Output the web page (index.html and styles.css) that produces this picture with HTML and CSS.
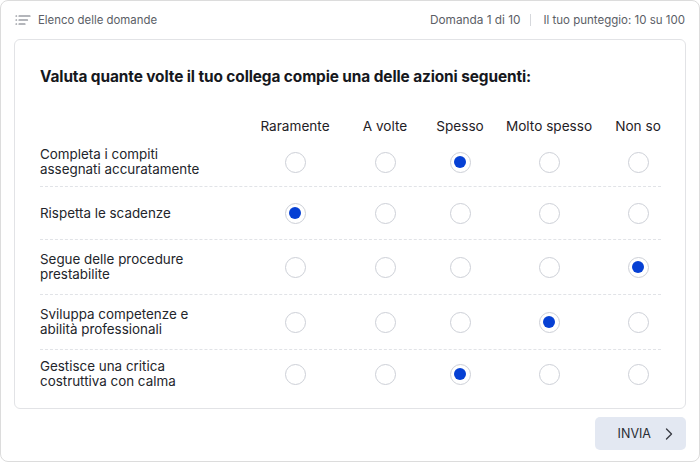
FILE: index.html
```html
<!DOCTYPE html>
<html lang="it">
<head>
<meta charset="utf-8">
<title>Questionario</title>
<link rel="stylesheet" href="styles.css">
</head>
<body>
<div class="frame">
  <header class="topbar">
    <div class="list-link">
      <svg class="list-icon" width="16" height="12" viewBox="0 0 16 12" aria-hidden="true">
        <g stroke="#6b6f78" stroke-width="1.2" stroke-linecap="round">
          <line x1="1" y1="2" x2="1.6" y2="2"/>
          <line x1="4" y1="2" x2="15" y2="2"/>
          <line x1="1" y1="6" x2="1.6" y2="6"/>
          <line x1="4" y1="6" x2="12.5" y2="6"/>
          <line x1="1" y1="10" x2="1.6" y2="10"/>
          <line x1="4" y1="10" x2="10" y2="10"/>
        </g>
      </svg>
      <span>Elenco delle domande</span>
    </div>
    <div class="status">
      <span class="q">Domanda 1 di 10</span>
      <span class="sep"></span>
      <span class="score">Il tuo punteggio: 10 su 100</span>
    </div>
  </header>

  <main class="card">
    <h1 class="title">Valuta quante volte il tuo collega compie una delle azioni seguenti:</h1>
    <div class="grid">
      <div class="row head">
        <div class="label"></div>
        <div class="cell">Raramente</div>
        <div class="cell">A volte</div>
        <div class="cell">Spesso</div>
        <div class="cell">Molto spesso</div>
        <div class="cell">Non so</div>
      </div>
      <div class="row item first">
        <div class="label">Completa i compiti<br>assegnati accuratamente</div>
        <div class="cell"><span class="radio"></span></div>
        <div class="cell"><span class="radio"></span></div>
        <div class="cell"><span class="radio on"></span></div>
        <div class="cell"><span class="radio"></span></div>
        <div class="cell"><span class="radio"></span></div>
      </div>
      <div class="row item">
        <div class="label">Rispetta le scadenze</div>
        <div class="cell"><span class="radio on"></span></div>
        <div class="cell"><span class="radio"></span></div>
        <div class="cell"><span class="radio"></span></div>
        <div class="cell"><span class="radio"></span></div>
        <div class="cell"><span class="radio"></span></div>
      </div>
      <div class="row item">
        <div class="label">Segue delle procedure<br>prestabilite</div>
        <div class="cell"><span class="radio"></span></div>
        <div class="cell"><span class="radio"></span></div>
        <div class="cell"><span class="radio"></span></div>
        <div class="cell"><span class="radio"></span></div>
        <div class="cell"><span class="radio on"></span></div>
      </div>
      <div class="row item">
        <div class="label">Sviluppa competenze e<br>abilità professionali</div>
        <div class="cell"><span class="radio"></span></div>
        <div class="cell"><span class="radio"></span></div>
        <div class="cell"><span class="radio"></span></div>
        <div class="cell"><span class="radio on"></span></div>
        <div class="cell"><span class="radio"></span></div>
      </div>
      <div class="row item last">
        <div class="label">Gestisce una critica<br>costruttiva con calma</div>
        <div class="cell"><span class="radio"></span></div>
        <div class="cell"><span class="radio"></span></div>
        <div class="cell"><span class="radio on"></span></div>
        <div class="cell"><span class="radio"></span></div>
        <div class="cell"><span class="radio"></span></div>
      </div>
    </div>
  </main>

  <footer class="footer">
    <button class="submit" type="button">INVIA
      <svg width="8" height="12" viewBox="0 0 8 12" aria-hidden="true"><path d="M1.5 1 L6.5 6 L1.5 11" fill="none" stroke="#3a3d45" stroke-width="1.4" stroke-linecap="round" stroke-linejoin="round"/></svg>
    </button>
  </footer>
</div>
</body>
</html>
```

FILE: styles.css
```css
* { box-sizing: border-box; }
html, body { margin: 0; padding: 0; background: #ffffff; }
body {
  font-family: "Inter", "Noto Sans", sans-serif;
  color: #1f2126;
}
.frame {
  width: 700px;
  height: 462px;
  border: 1px solid #dcdcdc;
  border-radius: 8px;
  padding: 0 13px 0 13px;
  display: flex;
  flex-direction: column;
}
.topbar {
  height: 38px;
  display: flex;
  align-items: center;
  justify-content: space-between;
  font-size: 11.4px;
  color: #5b5e66;
}
.list-link { display: flex; align-items: center; gap: 7px; padding-left: 1px; }
.list-icon { display: block; }
.status { display: flex; align-items: center; gap: 10px; padding-right: 1px; }
.status .q { font-size: 11.8px; }
.status .score { font-size: 11.5px; margin-left: 2px; }
.sep { width: 1px; height: 12px; background: #d6d8dc; }

.card {
  border: 1px solid #e2e3e6;
  border-radius: 6px;
  height: 370px;
  padding: 27px 24px 0 25px;
}
.title {
  margin: 0 0 27px 0;
  font-size: 15.4px;
  line-height: 20px;
  font-weight: 700;
  color: #16181d;
  letter-spacing: -0.1px;
}
.row {
  display: grid;
  grid-template-columns: 1fr 76px 104px 46px 132px 46px;
  align-items: center;
}
.row.head { height: 24px; font-size: 13.6px; color: #1f2126; }
.row.item {
  padding: 12px 0;
  border-bottom: 1px dashed #e1e3e7;
  min-height: 53px;
}
.row.item.first { padding: 9px 0; min-height: 0; }
.row.item.last { padding: 9px 0 0 0; border-bottom: none; min-height: 0; }
.label {
  font-size: 13.4px;
  line-height: 15px;
  color: #23252b;
}
.cell {
  display: flex;
  justify-content: center;
  white-space: nowrap;
}
.radio {
  width: 21px;
  height: 21px;
  border-radius: 50%;
  border: 1.3px solid #cdd0d7;
  background: #fff;
  display: flex;
  align-items: center;
  justify-content: center;
}
.radio.on::after {
  content: "";
  width: 12px;
  height: 12px;
  border-radius: 50%;
  background: #0640d4;
}
.footer {
  display: flex;
  justify-content: flex-end;
  padding-top: 8px;
}
.submit {
  width: 91px;
  height: 33px;
  border: none;
  border-radius: 5px;
  background: #e3e8f2;
  font-family: "Inter", "Noto Sans", sans-serif;
  font-size: 12.5px;
  color: #2a2d34;
  display: flex;
  align-items: center;
  justify-content: flex-end;
  gap: 14px;
  padding: 0 13px 0 0;
}
.submit svg { display: block; }
```
